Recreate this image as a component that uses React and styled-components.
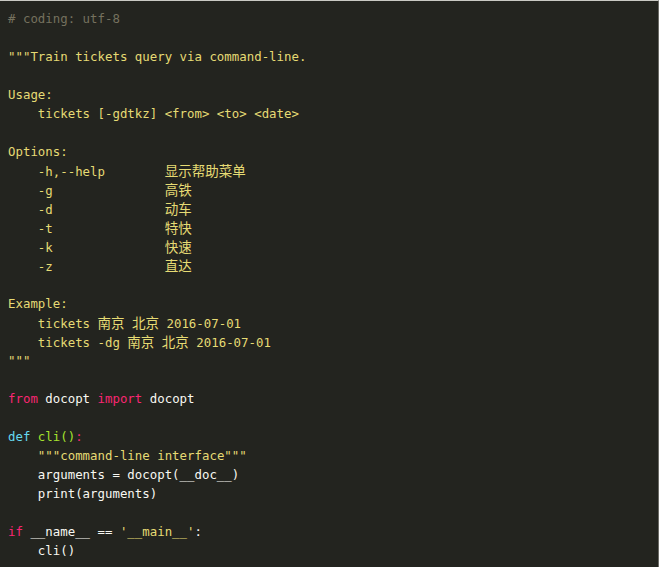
import React from 'react';
import styled, { createGlobalStyle } from 'styled-components';

const GlobalStyle = createGlobalStyle`
  html, body {
    margin: 0;
    padding: 0;
    background: #23241f;
  }
`;

const palette = {
  plain: '#f8f8f2',
  comment: '#75715e',
  string: '#e6db74',
  keyword: '#f92672',
  def: '#66d9ef',
  title: '#a6e22e',
};

const CodeBlock = styled.pre`
  margin: 0;
  min-height: 567px;
  box-sizing: border-box;
  padding: 8px 8px 0 8px;
  background: #23241f;
  border-top: 1px solid #c9c9c4;
  border-right: 1px solid #6b6b66;
  font-family: "DejaVu Sans Mono", "Liberation Mono", "Noto Sans CJK SC", monospace;
  font-size: 12.4px;
  color: #f8f8f2;
  overflow: hidden;
`;

const Line = styled.div`
  height: 19px;
  line-height: 19px;
  white-space: pre;
`;

const Token = styled.span`
  color: ${p => palette[p.$kind] || palette.plain};
`;

const Han = styled.span`
  font-family: "Noto Sans CJK SC", sans-serif;
  font-size: 13.5px;
  line-height: 19px;
`;

// split a run of text so the Chinese parts get the wider CJK face
function withHan(text) {
  const parts = text.split(/([\u4e00-\u9fff]+)/);
  return parts.map((part, i) =>
    /[\u4e00-\u9fff]/.test(part) ? <Han key={i}>{part}</Han> : part
  );
}

const S = (t) => ['string', t];
const P = (t) => ['plain', t];

const lines = [
  [['comment', '# coding: utf-8']],
  [],
  [S('"""Train tickets query via command-line.')],
  [],
  [S('Usage:')],
  [S('    tickets [-gdtkz] <from> <to> <date>')],
  [],
  [S('Options:')],
  [S('    -h,--help        显示帮助菜单')],
  [S('    -g               高铁')],
  [S('    -d               动车')],
  [S('    -t               特快')],
  [S('    -k               快速')],
  [S('    -z               直达')],
  [],
  [S('Example:')],
  [S('    tickets 南京 北京 2016-07-01')],
  [S('    tickets -dg 南京 北京 2016-07-01')],
  [S('"""')],
  [],
  [['keyword', 'from'], P(' docopt '), ['keyword', 'import'], P(' docopt')],
  [],
  [['def', 'def'], P(' '), ['title', 'cli()'], ['keyword', ':']],
  [P('    '), S('"""command-line interface"""')],
  [P('    arguments = docopt(__doc__)')],
  [P('    print(arguments)')],
  [],
  [['keyword', 'if'], P(' __name__ == '), S("'__main__'"), P(':')],
  [P('    cli()')],
];

export default function App() {
  return (
    <>
      <GlobalStyle />
      <CodeBlock>
        {lines.map((tokens, i) => (
          <Line key={i}>
            {tokens.length === 0
              ? ' '
              : tokens.map(([kind, text], j) => (
                  <Token key={j} $kind={kind}>{withHan(text)}</Token>
                ))}
          </Line>
        ))}
      </CodeBlock>
    </>
  );
}
